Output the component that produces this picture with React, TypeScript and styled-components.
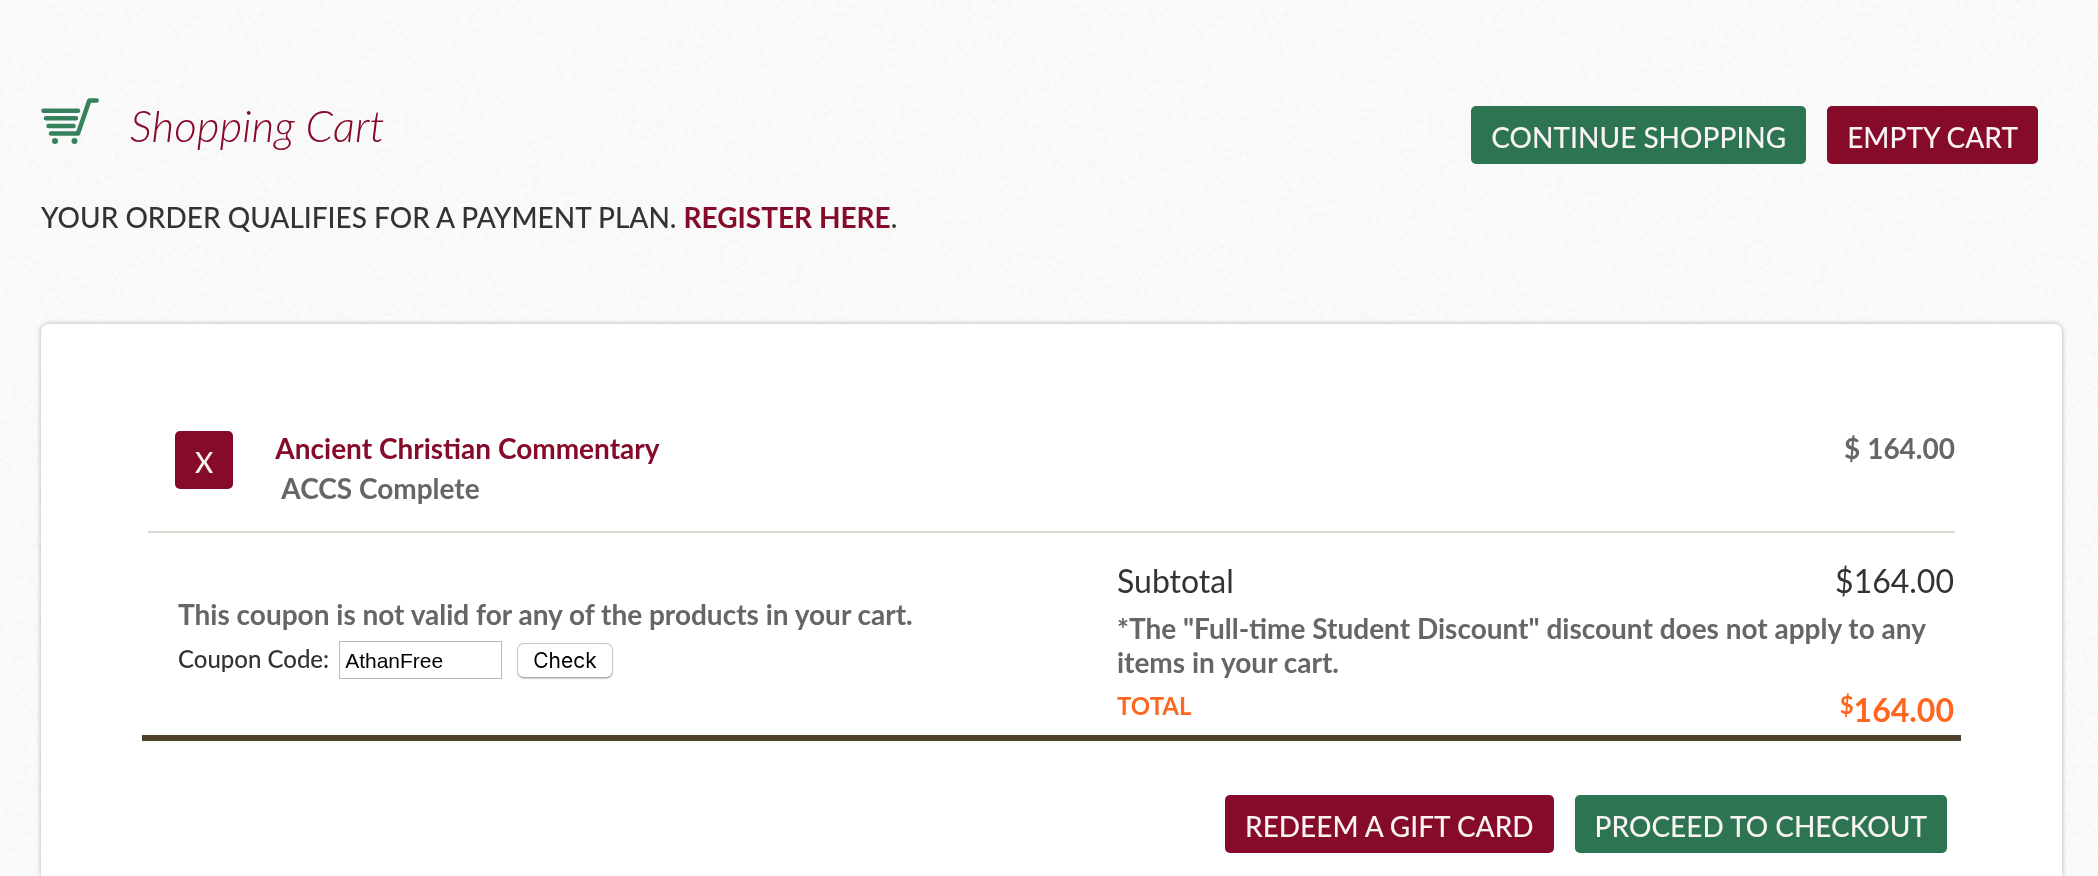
import React, { useState } from 'react';
import styled, { createGlobalStyle, css } from 'styled-components';

const GlobalStyle = createGlobalStyle`
  *, *::before, *::after { box-sizing: border-box; }
  body {
    margin: 0;
    background: #f9f9f9;
    color: #333;
    font-family: Lato, "Open Sans", sans-serif;
    font-size: 28px;
    line-height: 34px;
  }
  h1, h2, p { margin: 0; font-weight: inherit; font-size: inherit; }
`;

const Texture = styled.svg`
  position: fixed;
  inset: 0;
  z-index: -1;
  width: 100%;
  height: 100%;
  pointer-events: none;
`;

const Page = styled.main`
  display: flex;
  flex-direction: column;
  min-height: 100vh;
  padding: 98px 36px 0 41px;
`;

const Header = styled.header`
  display: flex;
  justify-content: space-between;
  padding-right: 24px;
`;

const Brand = styled.div`
  display: flex;
  gap: 31px;
  align-items: flex-start;
`;

const CartIcon = styled.svg`
  width: 58px;
  height: 47px;
`;

const Title = styled.h1`
  color: #860b2b;
  font-size: 44px;
  line-height: 54px;
  font-style: italic;
  font-weight: 300;
`;

const Actions = styled.div<{ $end?: boolean }>`
  display: flex;
  gap: 21px;
  padding-top: 8px;
  ${(p) => p.$end && css`
    justify-content: flex-end;
    padding: 54px 14px 23px 0;
  `}
`;

const Button = styled.button<{ $tone: 'green' | 'wine' }>`
  height: 58px;
  padding: 4px 20px 0;
  border: 0;
  border-radius: 5px;
  background: ${(p) => (p.$tone === 'green' ? '#2c7452' : '#860b2b')};
  color: #f9f3f3;
  font: inherit;
  font-weight: 500;
  cursor: pointer;
`;

const Notice = styled.p`
  margin-top: 36px;
  font-weight: 500;
`;

const Link = styled.a`
  color: #860b2b;
  font-weight: 700;
  text-decoration: none;
`;

const Card = styled.section`
  flex: 1;
  margin-top: 90px;
  padding: 104px 101px 0;
  border-radius: 8px 8px 0 0;
  background: #fff;
  box-shadow: 0 0 5px rgba(0, 0, 0, 0.3);
`;

const Item = styled.article`
  display: flex;
  align-items: flex-start;
  margin: 0 6px;
  padding: 0 0 23px 27px;
  border-bottom: 2px solid #d9d9cf;
  color: #666;
  font-weight: 700;
  line-height: 40px;
`;

const RemoveButton = styled(Button)`
  margin-top: 3px;
`;

const ItemText = styled.div`
  flex: 1;
  padding-left: 42px;
`;

const ItemName = styled.h2`
  color: #860b2b;
`;

const ItemDetail = styled.p`
  padding-left: 6px;
`;

const Checkout = styled.div`
  display: grid;
  grid-template-columns: 1fr 837px;
  gap: 0 133px;
  padding: 31px 7px 8px 36px;
  border-bottom: 6px solid #4f4029;
`;

const Message = styled.p`
  color: #666;
  font-weight: 700;
`;

const Coupon = styled.form`
  padding-top: 33px;
`;

const CouponRow = styled.div`
  display: flex;
  align-items: center;
  padding-top: 10px;
  color: #333;
  font-size: 24px;
  font-weight: 500;

  label { padding-bottom: 2px; }
`;

const CodeInput = styled.input`
  width: 163px;
  height: 38px;
  margin: 0 15px 0 10px;
  padding: 2px 5px 0;
  border: 1px solid #b8b8b8;
  background: #fff;
  color: #000;
  font: 21px "Liberation Sans", Arial, sans-serif;
`;

const CheckButton = styled.button`
  height: 35px;
  padding: 0 15px;
  border: 1px solid #c8c8c8;
  border-bottom-color: #b0b0b0;
  border-radius: 7px;
  background: #fff;
  box-shadow: 0 1px 1px rgba(0, 0, 0, 0.2);
  color: #000;
  font: 21px Inter, "Liberation Sans", sans-serif;
`;

const SummaryRow = styled.div`
  display: flex;
  justify-content: space-between;
  margin-bottom: 13px;
  font-size: 32px;
`;

const TotalRow = styled(SummaryRow)`
  margin: 10px 0 0;
  color: #ff6720;
  font-weight: 700;
`;

const TotalLabel = styled.span`
  font-size: 24px;
`;

const TotalAmount = styled.span`
  padding-top: 4px;
`;

const Currency = styled.sup`
  font-size: 24px;
  line-height: 0;
  vertical-align: 8px;
`;

export default function App() {
  const [code, setCode] = useState('AthanFree');
  return (
    <>
      <GlobalStyle />
      <Texture aria-hidden="true">
        <filter id="paper" x="0" y="0" width="100%" height="100%" colorInterpolationFilters="sRGB">
          <feTurbulence type="fractalNoise" baseFrequency="0.25" numOctaves="2" />
          <feColorMatrix values="0.06 0 0 0 0.947  0 0.06 0 0 0.947  0 0 0.06 0 0.947  0 0 0 0 1" />
        </filter>
        <rect width="100%" height="100%" filter="url(#paper)" />
      </Texture>
      <Page>
        <Header>
          <Brand>
            <CartIcon viewBox="0 0 58 47" aria-hidden="true" fill="none" stroke="#35825d" strokeWidth="4.5" strokeLinecap="round" strokeLinejoin="round">
              <path d="M2.5 12.8H37M5 20.3h30M7.5 28h25M10 35.5h27L48.3 2.5h7.4" />
              <circle cx="14" cy="43" r="3" fill="#35825d" stroke="none" />
              <circle cx="33.5" cy="43" r="3" fill="#35825d" stroke="none" />
            </CartIcon>
            <Title>Shopping Cart</Title>
          </Brand>
          <Actions>
            <Button type="button" $tone="green">CONTINUE SHOPPING</Button>
            <Button type="button" $tone="wine">EMPTY CART</Button>
          </Actions>
        </Header>
        <Notice>
          YOUR ORDER QUALIFIES FOR A PAYMENT PLAN. <Link href="#register">REGISTER HERE</Link>.
        </Notice>
        <Card>
          <Item>
            <RemoveButton type="button" $tone="wine">X</RemoveButton>
            <ItemText>
              <ItemName>Ancient Christian Commentary</ItemName>
              <ItemDetail>ACCS Complete</ItemDetail>
            </ItemText>
            <span>$ 164.00</span>
          </Item>
          <Checkout>
            <Coupon onSubmit={(e) => e.preventDefault()}>
              <Message>This coupon is not valid for any of the products in your cart.</Message>
              <CouponRow>
                <label htmlFor="coupon">Coupon Code:</label>
                <CodeInput id="coupon" value={code} onChange={(e) => setCode(e.target.value)} />
                <CheckButton type="submit">Check</CheckButton>
              </CouponRow>
            </Coupon>
            <div>
              <SummaryRow>
                <span>Subtotal</span>
                <span>$164.00</span>
              </SummaryRow>
              <Message>*The "Full-time Student Discount" discount does not apply to any items in your cart.</Message>
              <TotalRow>
                <TotalLabel>TOTAL</TotalLabel>
                <TotalAmount><Currency>$</Currency>164.00</TotalAmount>
              </TotalRow>
            </div>
          </Checkout>
          <Actions $end>
            <Button type="button" $tone="wine">REDEEM A GIFT CARD</Button>
            <Button type="button" $tone="green">PROCEED TO CHECKOUT</Button>
          </Actions>
        </Card>
      </Page>
    </>
  );
}
